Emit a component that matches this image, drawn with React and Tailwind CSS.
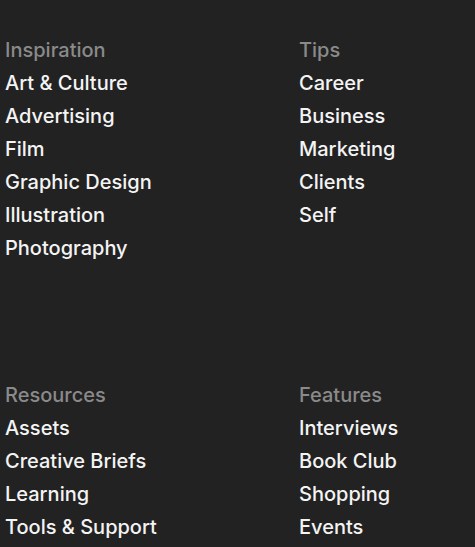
import React from "react";

const sections = [
  { title: "Inspiration", items: ["Art & Culture", "Advertising", "Film", "Graphic Design", "Illustration", "Photography"] },
  { title: "Tips", items: ["Career", "Business", "Marketing", "Clients", "Self"] },
  { title: "Resources", items: ["Assets", "Creative Briefs", "Learning", "Tools & Support"] },
  { title: "Features", items: ["Interviews", "Book Club", "Shopping", "Events"] },
];

export default function App() {
  return (
    <div className="w-[475px] h-[547px] bg-[#222222] overflow-hidden" style={{ fontFamily: "Inter, 'Noto Sans', sans-serif" }}>
      <div className="grid grid-cols-[294px_1fr] gap-y-[114px] pl-[5px] pt-[34px]">
        {sections.map((s) => (
          <div key={s.title} className="flex flex-col">
            <div className="text-[20px] font-medium leading-[33px] text-[#8a8a8a]">{s.title}</div>
            {s.items.map((i) => (
              <div key={i} className="text-[20px] font-medium leading-[33px] text-[#f4f4f4]">{i}</div>
            ))}
          </div>
        ))}
      </div>
    </div>
  );
}
